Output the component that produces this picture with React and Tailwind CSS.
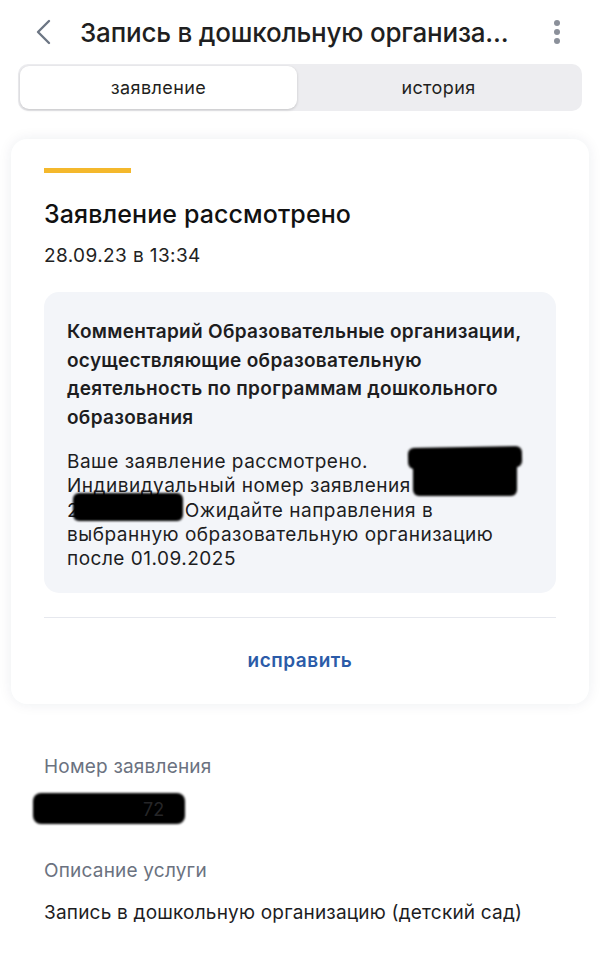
import React from 'react';

const Blob = ({ className }) => (
    <div className={`absolute bg-black rounded-[6px] blur-[1px] ${className}`} />
);

const App = () => {
    return (
        <div className="min-h-[967px] bg-white text-[#1c1c1e]" style={{ fontFamily: 'Inter, "Noto Sans", sans-serif' }}>
            {/* Header */}
            <div className="flex items-center h-[64px] pl-[34px] pr-[40px]">
                <svg width="18" height="26" viewBox="0 0 18 26" fill="none" className="shrink-0">
                    <path d="M15 2L4 13L15 24" stroke="#6d7684" strokeWidth="2.4" strokeLinecap="round" strokeLinejoin="round" />
                </svg>
                <h1 className="ml-[28px] flex-1 text-[26px] font-medium tracking-[-0.2px] whitespace-nowrap overflow-hidden text-[#1f1f21]">
                    Запись в дошкольную организа...
                </h1>
                <div className="flex flex-col gap-[3px] items-center">
                    <span className="w-[6px] h-[6px] rounded-full bg-[#8b909a]" />
                    <span className="w-[6px] h-[6px] rounded-full bg-[#8b909a]" />
                    <span className="w-[6px] h-[6px] rounded-full bg-[#8b909a]" />
                </div>
            </div>

            {/* Tabs */}
            <div className="mx-[18px] bg-[#ededf0] rounded-[10px] p-[2px] flex h-[47px]">
                <div className="w-[277px] bg-white rounded-[9px] shadow-[0_1px_3px_rgba(0,0,0,0.18)] flex items-center justify-center text-[18px] tracking-[0.4px] text-[#1f1f21]">
                    заявление
                </div>
                <div className="flex-1 flex items-center justify-center text-[18px] tracking-[0.4px] text-[#1f1f21]">
                    история
                </div>
            </div>

            {/* Status card */}
            <div className="mx-[11px] mt-[28px] bg-white rounded-[16px] shadow-[0_0_14px_rgba(30,40,80,0.08)] px-[33px] pt-[29px]">
                <div className="w-[87px] h-[5px] bg-[#f4b82c]" />
                <h2 className="mt-[26px] text-[25px] leading-[30px] font-medium tracking-[0.1px] text-[#111]">Заявление рассмотрено</h2>
                <p className="mt-[15px] text-[19px] leading-[24px] tracking-[0.4px] text-[#222]">28.09.23 в 13:34</p>

                <div className="mt-[24px] bg-[#f3f5f9] rounded-[15px] pl-[23px] pr-[18px] pt-[26px] pb-[22px]">
                    <p className="text-[19px] font-semibold leading-[28.5px] tracking-[0.3px] text-[#1d1d1f] whitespace-nowrap">
                        Комментарий Образовательные организации,<br />
                        осуществляющие образовательную<br />
                        деятельность по программам дошкольного<br />
                        образования
                    </p>
                    <div className="relative mt-[18px]">
                        <p className="text-[19px] leading-[24.3px] tracking-[0.5px] text-[#1d1d1f] whitespace-nowrap">
                            Ваше заявление рассмотрено.<br />
                            Индивидуальный номер заявления 00000007<br />
                            200000000 Ожидайте направления в<br />
                            выбранную образовательную организацию<br />
                            после 01.09.2025
                        </p>
                        <Blob className="left-[341px] top-[-3px] w-[114px] h-[21px] -rotate-1" />
                        <Blob className="left-[346px] top-[9px] w-[104px] h-[37px]" />
                        <Blob className="left-[6px] top-[43px] w-[110px] h-[28px]" />
                    </div>
                </div>

                <div className="mt-[24px] border-t border-[#e6e8ee]" />
                <div className="h-[86px] flex items-center justify-center text-[19px] font-semibold tracking-[0.5px] text-[#2b5ba8]">
                    исправить
                </div>
            </div>

            {/* Details */}
            <div className="px-[44px] mt-[51px]">
                <p className="text-[19px] leading-[24px] tracking-[0.2px] text-[#6b7280]">Номер заявления</p>
                <div className="relative h-[80px]">
                    <Blob className="left-[-11px] top-[14px] w-[152px] h-[31px] rounded-[8px]" />
                    <span className="absolute left-[99px] top-[17px] text-[18px] text-[#262628]">72</span>
                </div>
                <p className="text-[19px] leading-[24px] tracking-[0.2px] text-[#6b7280]">Описание услуги</p>
                <p className="mt-[18px] text-[19px] leading-[24px] tracking-[0.2px] text-[#1d1d1f]">Запись в дошкольную организацию (детский сад)</p>
            </div>
        </div>
    );
};

export default App;
